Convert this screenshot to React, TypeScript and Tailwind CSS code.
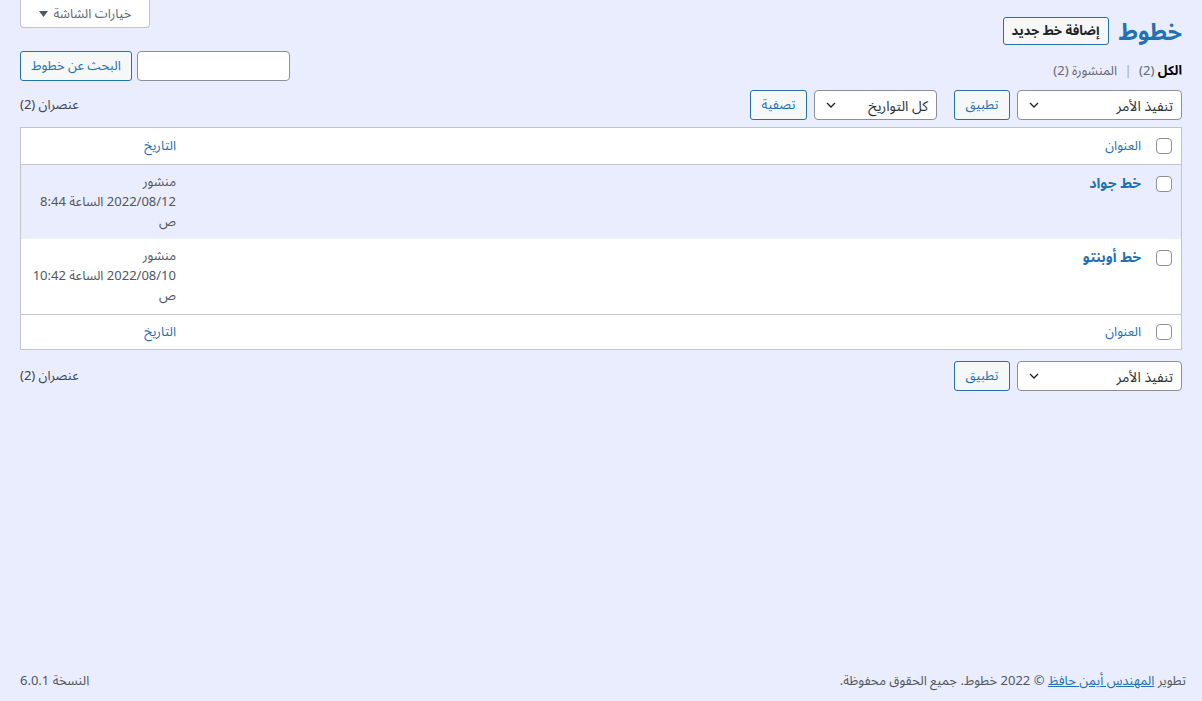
import React from "react";

const font = { fontFamily: '"Noto Sans", "Noto Sans Arabic", "DejaVu Sans", sans-serif' };

function Chevron() {
  return (
    <svg width="16" height="16" viewBox="0 0 20 20" className="shrink-0">
      <path d="M5 7.5l5 5 5-5" fill="none" stroke="#1d2327" strokeWidth="1.6" />
    </svg>
  );
}

function Select({ label, w }: { label: string; w: string }) {
  return (
    <div
      className={`${w} h-[30px] bg-white border border-[#8c8f94] rounded-[4px] flex items-center justify-between pr-2 pl-2 text-[14px] text-[#2c3338]`}
    >
      <span>{label}</span>
      <Chevron />
    </div>
  );
}

function Btn({ label, w }: { label: string; w: string }) {
  return (
    <div
      className={`${w} h-[30px] bg-[#f6f7f7] border border-[#2271b1] rounded-[3px] flex items-center justify-center text-[13px] text-[#2271b1]`}
    >
      {label}
    </div>
  );
}

function Check() {
  return <div className="w-4 h-4 bg-white border border-[#8c8f94] rounded-[4px] shrink-0" />;
}

function DateCell({ date, time }: { date: string; time: string }) {
  return (
    <div className="text-[13px] leading-[20px] text-[#50575e]">
      <div>منشور</div>
      <div>
        {date} الساعة {time}
      </div>
      <div>ص</div>
    </div>
  );
}

export default function App() {
  return (
    <div dir="rtl" style={font} className="min-h-[701px] bg-[#eaedfd] flex flex-col text-[13px] text-[#3c434a]">
      <div className="px-5 flex-1">
        {/* header */}
        <div className="flex items-start justify-between">
          <div className="flex items-center gap-[10px] pt-[17px]">
            <h1 className="text-[23px] font-bold text-[#2271b1] leading-[28px]">خطوط</h1>
            <div className="h-[28px] px-[8px] bg-[#f6f7f7] border border-[#2271b1] rounded-[3px] flex items-center text-[13px] font-bold text-[#1d2327]">
              إضافة خط جديد
            </div>
          </div>
          <div className="w-[130px] h-[28px] bg-white border border-t-0 border-[#c3c4c7] rounded-b-[4px] flex items-center justify-center gap-[6px] text-[13px] text-[#646970]">
            <span>خيارات الشاشة</span>
            <svg width="9" height="6" viewBox="0 0 9 6">
              <path d="M0 0h9L4.5 6z" fill="#50575e" />
            </svg>
          </div>
        </div>

        {/* views + search */}
        <div className="flex items-end justify-between mt-[6px]">
          <div className="text-[13px] pb-[1px] text-[#646970]">
            <span className="font-bold text-[#000]">الكل</span> <span>(2)</span>{" "}
            <span className="mx-1 text-[#a7aaad]">|</span> <span>المنشورة (2)</span>
          </div>
          <div className="flex items-center gap-[5px]">
            <div className="w-[153px] h-[30px] bg-white border border-[#8c8f94] rounded-[4px]" />
            <Btn label="البحث عن خطوط" w="w-[112px]" />
          </div>
        </div>

        {/* top tablenav */}
        <div className="flex items-center justify-between mt-[9px] h-[30px]">
          <div className="flex items-center">
            <Select label="تنفيذ الأمر" w="w-[165px]" />
            <div className="w-[7px]" />
            <Btn label="تطبيق" w="w-[56px]" />
            <div className="w-[17px]" />
            <Select label="كل التواريخ" w="w-[123px]" />
            <div className="w-[7px]" />
            <Btn label="تصفية" w="w-[57px]" />
          </div>
          <div className="text-[13px] text-[#3c434a]">عنصران (2)</div>
        </div>

        {/* table */}
        <div className="mt-[7px] bg-white border border-[#c3c4c7]">
          <div className="h-[37px] flex items-center border-b border-[#c3c4c7]">
            <div className="flex-1 flex items-center pr-[9px] gap-[15px]">
              <Check />
              <span className="text-[#2271b1] text-[13px]">العنوان</span>
            </div>
            <div className="w-[165px] pr-[10px] text-[#2271b1] text-[13px]">التاريخ</div>
          </div>

          <div className="h-[74px] flex items-start bg-[#eaedfd]">
            <div className="flex-1 flex items-start pr-[9px] gap-[15px] pt-[11px]">
              <Check />
              <span className="text-[#2271b1] text-[14px] font-bold leading-[18px] -mt-[2px]">خط جواد</span>
            </div>
            <div className="w-[165px] pr-[10px] pt-[6px]">
              <DateCell date="2022/08/12" time="8:44" />
            </div>
          </div>

          <div className="h-[75px] flex items-start bg-white">
            <div className="flex-1 flex items-start pr-[9px] gap-[15px] pt-[11px]">
              <Check />
              <span className="text-[#2271b1] text-[14px] font-bold leading-[18px] -mt-[2px]">خط أوبنتو</span>
            </div>
            <div className="w-[165px] pr-[10px] pt-[6px]">
              <DateCell date="2022/08/10" time="10:42" />
            </div>
          </div>

          <div className="h-[35px] flex items-center border-t border-[#c3c4c7]">
            <div className="flex-1 flex items-center pr-[9px] gap-[15px]">
              <Check />
              <span className="text-[#2271b1] text-[13px]">العنوان</span>
            </div>
            <div className="w-[165px] pr-[10px] text-[#2271b1] text-[13px]">التاريخ</div>
          </div>
        </div>

        {/* bottom tablenav */}
        <div className="flex items-center justify-between mt-[11px] h-[30px]">
          <div className="flex items-center">
            <Select label="تنفيذ الأمر" w="w-[165px]" />
            <div className="w-[7px]" />
            <Btn label="تطبيق" w="w-[56px]" />
          </div>
          <div className="text-[13px] text-[#3c434a]">عنصران (2)</div>
        </div>
      </div>

      {/* footer */}
      <div className="pl-5 pr-4 pb-[11px] flex items-center justify-between text-[13px] text-[#50575e]">
        <div>
          تطوير{" "}
          <span className="text-[#2271b1] underline">المهندس أيمن حافظ</span> © 2022 خطوط. جميع الحقوق محفوظة.
        </div>
        <div>النسخة 6.0.1</div>
      </div>
    </div>
  );
}
